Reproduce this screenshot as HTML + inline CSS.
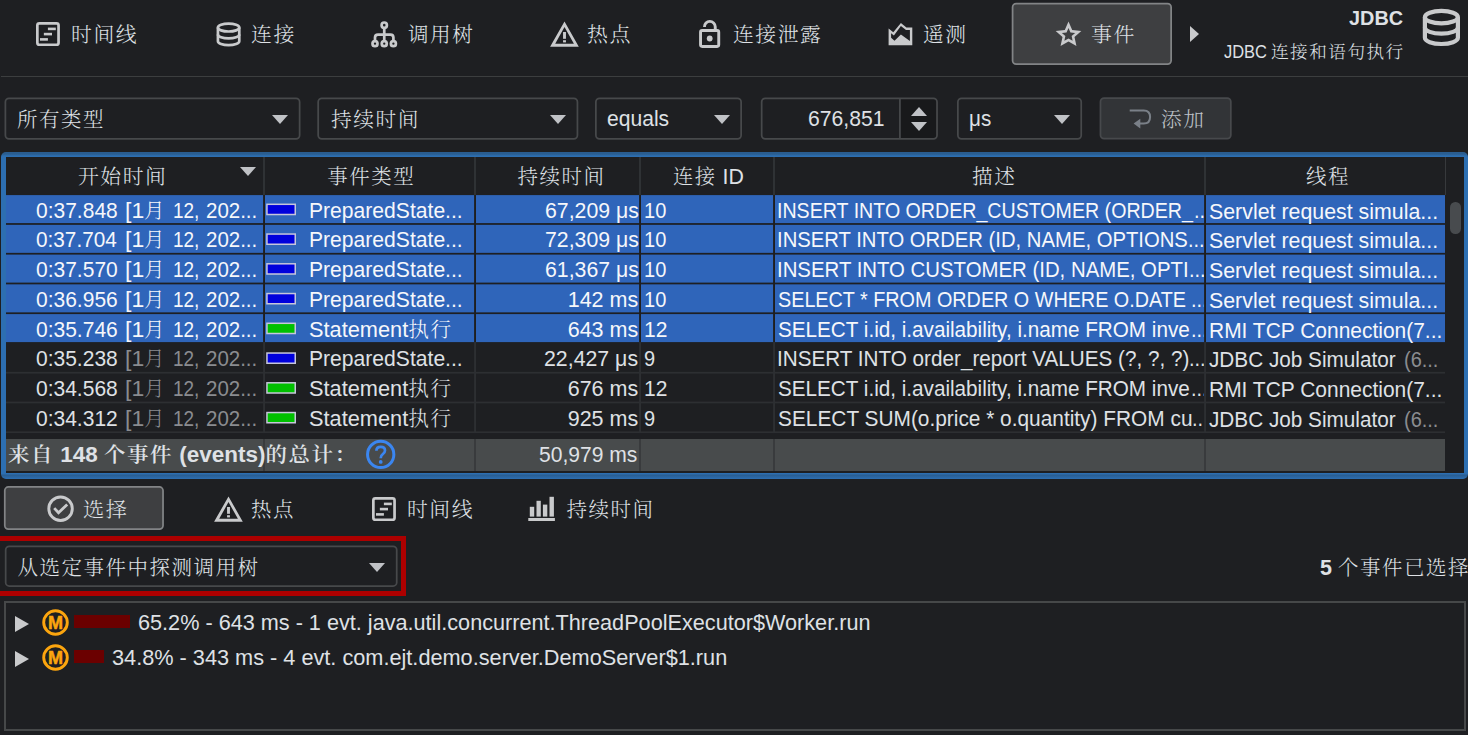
<!DOCTYPE html>
<html lang="zh-CN">
<head>
<meta charset="utf-8">
<title>JDBC 事件</title>
<style>
html,body{margin:0;padding:0;}
body{width:1468px;height:735px;background:#1e1f22;color:#dfe1e5;overflow:hidden;position:relative;
  font-family:"Liberation Sans","Noto Serif CJK SC",sans-serif;font-size:21.5px;}
.abs{position:absolute;}
.t{position:absolute;white-space:nowrap;line-height:30px;height:30px;transform-origin:0 0;}
.c{font-size:20.5px;letter-spacing:1.5px;font-weight:300;}
.tc{position:absolute;white-space:nowrap;line-height:30px;height:30px;font-size:20.5px;letter-spacing:1.5px;transform-origin:0 0;font-weight:300;}
svg{position:absolute;overflow:visible;}
.arrow{position:absolute;width:0;height:0;border-left:8px solid transparent;border-right:8px solid transparent;border-top:9.2px solid #c0c2c6;}
.row{position:absolute;left:6px;width:1439px;}
.vl{position:absolute;width:2px;}
.clip{position:absolute;overflow:hidden;}
</style>
</head>
<body>

<svg style="left:0;top:0" width="1468" height="735" viewBox="0 0 1468 735"><rect x="1012.58" y="3.58" width="158.55" height="60.65" rx="3.62" fill="#3e3f41" stroke="#828486" stroke-width="1.75"/><rect x="5.38" y="98.28" width="294.25" height="40.65" rx="3.62" fill="none" stroke="#47494b" stroke-width="1.75"/><rect x="318.18" y="98.28" width="259.25" height="40.65" rx="3.62" fill="none" stroke="#47494b" stroke-width="1.75"/><rect x="595.88" y="98.28" width="145.25" height="40.65" rx="3.62" fill="none" stroke="#47494b" stroke-width="1.75"/><path d="M900.8 98.3H933.4Q937 98.3 937 101.9V135.3Q937 138.9 933.4 138.9H900.8Z" fill="#18191b"/><path d="M899.9 98V139" stroke="#47494b" stroke-width="1.75"/><rect x="761.67" y="98.28" width="175.35" height="40.65" rx="3.62" fill="none" stroke="#47494b" stroke-width="1.75"/><rect x="957.88" y="98.28" width="123.35" height="40.65" rx="3.62" fill="none" stroke="#47494b" stroke-width="1.75"/><rect x="1100.47" y="98.17" width="130.35" height="40.45" rx="3.62" fill="#323437" stroke="#47494c" stroke-width="1.75"/><rect x="4.78" y="486.98" width="158.25" height="42.25" rx="3.62" fill="#3e3f41" stroke="#828486" stroke-width="1.75"/><rect x="5.67" y="546.27" width="391.05" height="39.75" rx="3.62" fill="none" stroke="#47494b" stroke-width="1.75"/></svg>
<!-- ===== top toolbar ===== -->
<div class="tc" style="left:71.0px;top:20px;transform:scaleX(1.0175);">时间线</div>
<div class="tc" style="left:251.0px;top:20px;transform:scaleX(1.0195);">连接</div>
<div class="tc" style="left:408.2px;top:20px;transform:scaleX(1.0047);">调用树</div>
<div class="tc" style="left:587.0px;top:20px;transform:scaleX(1.0244);">热点</div>
<div class="tc" style="left:733.2px;top:20px;transform:scaleX(1.0165);">连接泄露</div>
<div class="tc" style="left:922.6px;top:20px;transform:scaleX(1.0122);">遥测</div>
<div class="tc" style="left:1091.0px;top:20px;transform:scaleX(1.0244);">事件</div>
<div class="t" style="left:1349.2px;top:3px;transform:scaleX(0.9926);font-weight:bold;font-size:20px;">JDBC</div>
<div class="t" style="left:1223.6px;top:36.5px;transform:scaleX(0.9130);font-size:18px;">JDBC</div>
<div class="t" style="left:1271.1px;top:36.5px;transform:scaleX(1.0054);font-size:17.5px;letter-spacing:1.5px;font-weight:300;">连接和语句执行</div>
<svg style="left:36.2px;top:22.4px" width="24" height="24" viewBox="0 0 24 24" fill="#c9cacc"><rect x="1.35" y="1.35" width="21.2" height="21.4" rx="2" fill="none" stroke="#c9cacc" stroke-width="2.7"/><rect x="11.9" y="5.6" width="7.9" height="2.6"/><rect x="7.85" y="10.8" width="8.15" height="2.6"/><rect x="4" y="16.1" width="7.9" height="2.6"/></svg>
<svg style="left:0;top:0" width="1468" height="80" viewBox="0 0 1468 80" fill="none" stroke="#c9cacc" stroke-width="2.7"><ellipse cx="228.6" cy="27.6" rx="10.67" ry="3.9"/><path d="M217.93 27.6V41.2A10.67 3.9 0 0 0 239.26999999999998 41.2V27.6"/><path d="M217.93 34.4A10.67 3.9 0 0 0 239.26999999999998 34.4"/></svg>
<svg style="left:0;top:0" width="1468" height="80" viewBox="0 0 1468 80" fill="none" stroke="#c9cacc" stroke-width="2.7"><circle cx="384.25" cy="25.15" r="2.65"/><circle cx="375" cy="43.65" r="2.5"/><circle cx="384.25" cy="43.65" r="2.5"/><circle cx="393.4" cy="43.65" r="2.5"/><path d="M384.25 27.8V41.1M375 41.1V37.6Q375 34.6 378 34.6H390.4Q393.4 34.6 393.4 37.6V41.1"/></svg>
<svg style="left:550px;top:21px" width="29" height="27" viewBox="0 0 29 27" fill="#c9cacc"><path fill-rule="evenodd" d="M14.5 0.6L28.8 25.65H0.1ZM14.5 6.1L23.9 22.8H5.2Z"/><rect x="13.05" y="11" width="2.9" height="6.8"/><rect x="13.05" y="19.2" width="2.9" height="2.2"/></svg>
<svg style="left:0;top:0" width="1468" height="80" viewBox="0 0 1468 80" fill="none" stroke="#c9cacc" stroke-width="2.9"><rect x="700.55" y="30.55" width="18.2" height="15.9" rx="1.6"/><path d="M704.45 26.9A5.4 5.4 0 0 1 715.25 26.75V30"/><circle cx="709.7" cy="38.5" r="2.9" fill="#c9cacc" stroke="none"/></svg>
<svg style="left:0;top:0" width="1468" height="80" viewBox="0 0 1468 80"><path fill="#c9cacc" fill-rule="evenodd" d="M888.6 28.4L893.3 32.2L900.9 22.9L906.4 27.6H912.3V45.2H888.6ZM891.1 33.3L893.9 35.5L900.9 25.9L906 30H909.9V40.9L900.9 34.5L894.5 40.7L891.1 37.8Z"/></svg>
<svg style="left:0;top:0" width="1468" height="80" viewBox="0 0 1468 80" fill="#c9cacc"><path fill-rule="evenodd" d="M1068.50 21.60L1072.20 30.00L1081.34 30.93L1074.49 37.05L1076.44 46.02L1068.50 41.40L1060.56 46.02L1062.51 37.05L1055.66 30.93L1064.80 30.00ZM1068.50 28.10L1070.44 32.43L1075.16 32.94L1071.64 36.12L1072.61 40.76L1068.50 38.40L1064.39 40.76L1065.36 36.12L1061.84 32.94L1066.56 32.43Z"/></svg>
<div class="abs" style="left:1190px;top:26px;width:0;height:0;border-top:8.5px solid transparent;border-bottom:8.5px solid transparent;border-left:9px solid #c9cacc;"></div>
<svg style="left:0;top:0" width="1468" height="80" viewBox="0 0 1468 80" fill="none" stroke="#c9cacc" stroke-width="4.2"><ellipse cx="1441.4" cy="17.15" rx="16.5" ry="6.25"/><path d="M1424.9 17.15V37.75A16.5 6.25 0 0 0 1457.9 37.75V17.15"/><path d="M1424.9 27.45A16.5 6.25 0 0 0 1457.9 27.45"/></svg>
<div class="abs" style="left:1px;top:76px;width:1467px;height:1px;background:#3c3e3f;"></div>
<!-- ===== filter row ===== -->
<div class="arrow" style="left:272.2px;top:114.7px;"></div>
<div class="tc" style="left:17.0px;top:104.5px;">所有类型</div>
<div class="arrow" style="left:550.0px;top:114.7px;"></div>
<div class="tc" style="left:331.0px;top:104.5px;transform:scaleX(1.0118);">持续时间</div>
<div class="arrow" style="left:713.7px;top:114.7px;"></div>
<div class="t" style="left:607.2px;top:103.5px;transform:scaleX(0.9806);">equals</div>
<div class="abs" style="left:911px;top:106.6px;width:0;height:0;border-left:8px solid transparent;border-right:8px solid transparent;border-bottom:9.2px solid #c0c2c6;"></div>
<div class="arrow" style="left:911px;top:121.8px;"></div>
<div class="t" style="left:807.7px;top:103.5px;transform:scaleX(0.9842);">676,851</div>
<div class="arrow" style="left:1053.8px;top:114.7px;"></div>
<div class="t" style="left:968.8px;top:103.5px;transform:scaleX(0.9591);">μs</div>
<svg style="left:1128px;top:107px" width="26" height="24" viewBox="0 0 26 24" fill="none" stroke="#7a8088" stroke-width="2"><path d="M1.7 3.4H15.8Q22.1 3.4 22.1 10Q22.1 16.6 15.8 16.6H11"/><path d="M5.6 16.6L12.3 11.7V21.5Z" fill="#7a8088" stroke="none"/></svg>
<div class="tc" style="left:1161.4px;top:104.5px;transform:scaleX(1.0098);color:#bcc0c6;">添加</div>
<!-- ===== table ===== -->
<div class="abs" style="left:1px;top:152px;width:1467px;height:327px;box-sizing:border-box;border-radius:5px;background:linear-gradient(#2a5d90 0,#2a5d90 2px,#2d6fb2 4px,#2d6fb2 322px,#2a5d90 323px,#2b66a2 325px,#2d6fb2 327px);"></div>
<div class="abs" style="left:6px;top:157px;width:1458px;height:316px;background:#1e1f22;"></div>
<svg style="left:0;top:0" width="1468" height="735" viewBox="0 0 1468 735"><rect x="6" y="195.1" width="1439" height="28" fill="#2f65ba"/><rect x="266.95" y="204.30" width="28.3" height="10.2" fill="#0000dc" stroke="#c6c6da" stroke-width="1.5"/><rect x="6" y="224.85" width="1439" height="28" fill="#2f65ba"/><rect x="266.95" y="234.05" width="28.3" height="10.2" fill="#0000dc" stroke="#c6c6da" stroke-width="1.5"/><rect x="6" y="254.6" width="1439" height="28" fill="#2f65ba"/><rect x="266.95" y="263.80" width="28.3" height="10.2" fill="#0000dc" stroke="#c6c6da" stroke-width="1.5"/><rect x="6" y="284.35" width="1439" height="28" fill="#2f65ba"/><rect x="266.95" y="293.55" width="28.3" height="10.2" fill="#0000dc" stroke="#c6c6da" stroke-width="1.5"/><rect x="6" y="314.1" width="1439" height="28" fill="#2f65ba"/><rect x="266.95" y="323.30" width="28.3" height="10.2" fill="#00c000" stroke="#c6c6da" stroke-width="1.5"/><rect x="6" y="371.85" width="1439" height="1.75" fill="#2d2f32"/><rect x="266.95" y="353.05" width="28.3" height="10.2" fill="#0000dc" stroke="#c6c6da" stroke-width="1.5"/><rect x="6" y="401.6" width="1439" height="1.75" fill="#2d2f32"/><rect x="266.95" y="382.80" width="28.3" height="10.2" fill="#00c000" stroke="#c6c6da" stroke-width="1.5"/><rect x="6" y="431.35" width="1439" height="1.75" fill="#2d2f32"/><rect x="266.95" y="412.55" width="28.3" height="10.2" fill="#00c000" stroke="#c6c6da" stroke-width="1.5"/><rect x="263.1" y="195" width="1.9" height="147.1" fill="#1f1e1e"/><rect x="263.1" y="342.1" width="1.9" height="91" fill="#2d2f32"/><rect x="474.1" y="195" width="1.9" height="147.1" fill="#1f1e1e"/><rect x="474.1" y="342.1" width="1.9" height="91" fill="#2d2f32"/><rect x="639.1" y="195" width="1.9" height="147.1" fill="#1f1e1e"/><rect x="639.1" y="342.1" width="1.9" height="91" fill="#2d2f32"/><rect x="773.1" y="195" width="1.9" height="147.1" fill="#1f1e1e"/><rect x="773.1" y="342.1" width="1.9" height="91" fill="#2d2f32"/><rect x="1204.1" y="195" width="1.9" height="147.1" fill="#1f1e1e"/><rect x="1204.1" y="342.1" width="1.9" height="91" fill="#2d2f32"/></svg>
<div class="tc" style="left:78.0px;top:162px;transform:scaleX(1.0167);">开始时间</div>
<div class="tc" style="left:327.3px;top:162px;">事件类型</div>
<div class="tc" style="left:517.5px;top:162px;">持续时间</div>
<div class="t" style="left:672.8px;top:161.5px;transform:scaleX(0.9900);"><span class="c">连接</span> ID</div>
<div class="tc" style="left:971.7px;top:162px;transform:scaleX(1.0098);">描述</div>
<div class="tc" style="left:1306.0px;top:162px;">线程</div>
<div class="arrow" style="left:240px;top:167px;"></div>
<div class="vl" style="left:263px;top:157px;height:38px;width:2px;background:#2f3235;"></div>
<div class="vl" style="left:474px;top:157px;height:38px;width:2px;background:#2f3235;"></div>
<div class="vl" style="left:639px;top:157px;height:38px;width:2px;background:#2f3235;"></div>
<div class="vl" style="left:773px;top:157px;height:38px;width:2px;background:#2f3235;"></div>
<div class="vl" style="left:1204px;top:157px;height:38px;width:2px;background:#2f3235;"></div>
<div class="vl" style="left:1445px;top:157px;height:38px;width:1px;background:#37393c;"></div>
<div class="t" style="left:36.0px;top:195.5px;transform:scaleX(0.9768);color:#f6f7fa;">0:37.848</div>
<div class="t" style="left:124.8px;top:195.5px;transform:scaleX(1.0687);color:#f6f7fa;">[1</div>
<div class="tc" style="left:144.2px;top:195.5px;transform:scaleX(1.0063);color:#f6f7fa;">月</div>
<div class="t" style="left:173.2px;top:195.5px;transform:scaleX(0.8821);color:#f6f7fa;">12,</div>
<div class="t" style="left:206.3px;top:195.5px;transform:scaleX(0.9529);color:#f6f7fa;">202...</div>
<div class="t" style="left:309.0px;top:195.5px;transform:scaleX(0.9818);color:#f6f7fa;">PreparedState...</div>
<div class="t" style="left:544.6px;top:195.5px;transform:scaleX(0.9892);color:#f6f7fa;">67,209 μs</div>
<div class="t" style="left:643.9px;top:195.5px;transform:scaleX(0.9304);color:#f6f7fa;">10</div>
<div class="clip" style="left:776px;top:195.5px;width:428px;height:30px;">
<div class="t" style="left:1.4px;top:0px;transform:scaleX(0.9121);color:#f6f7fa;">INSERT INTO ORDER_CUSTOMER (ORDER_</div>
<div class="t" style="left:418.4px;top:0px;transform:scaleX(0.9286);color:#f6f7fa;">...</div>
</div>
<div class="t" style="left:1208.8px;top:196.5px;transform:scaleX(0.9934);color:#f6f7fa;">Servlet request simula...</div>
<div class="t" style="left:36.0px;top:225.25px;transform:scaleX(0.9651);color:#f6f7fa;">0:37.704</div>
<div class="t" style="left:124.8px;top:225.25px;transform:scaleX(1.0687);color:#f6f7fa;">[1</div>
<div class="tc" style="left:144.2px;top:225.25px;transform:scaleX(1.0063);color:#f6f7fa;">月</div>
<div class="t" style="left:173.2px;top:225.25px;transform:scaleX(0.8821);color:#f6f7fa;">12,</div>
<div class="t" style="left:206.3px;top:225.25px;transform:scaleX(0.9529);color:#f6f7fa;">202...</div>
<div class="t" style="left:309.0px;top:225.25px;transform:scaleX(0.9818);color:#f6f7fa;">PreparedState...</div>
<div class="t" style="left:544.6px;top:225.25px;transform:scaleX(0.9892);color:#f6f7fa;">72,309 μs</div>
<div class="t" style="left:643.9px;top:225.25px;transform:scaleX(0.9304);color:#f6f7fa;">10</div>
<div class="clip" style="left:776px;top:225.25px;width:428px;height:30px;">
<div class="t" style="left:1.3px;top:0px;transform:scaleX(0.9422);color:#f6f7fa;">INSERT INTO ORDER (ID, NAME, OPTIONS</div>
<div class="t" style="left:412.3px;top:0px;transform:scaleX(0.9286);color:#f6f7fa;">...</div>
</div>
<div class="t" style="left:1208.8px;top:226.25px;transform:scaleX(0.9934);color:#f6f7fa;">Servlet request simula...</div>
<div class="t" style="left:36.0px;top:255.0px;transform:scaleX(0.9768);color:#f6f7fa;">0:37.570</div>
<div class="t" style="left:124.8px;top:255.0px;transform:scaleX(1.0687);color:#f6f7fa;">[1</div>
<div class="tc" style="left:144.2px;top:255.0px;transform:scaleX(1.0063);color:#f6f7fa;">月</div>
<div class="t" style="left:173.2px;top:255.0px;transform:scaleX(0.8821);color:#f6f7fa;">12,</div>
<div class="t" style="left:206.3px;top:255.0px;transform:scaleX(0.9529);color:#f6f7fa;">202...</div>
<div class="t" style="left:309.0px;top:255.0px;transform:scaleX(0.9818);color:#f6f7fa;">PreparedState...</div>
<div class="t" style="left:544.6px;top:255.0px;transform:scaleX(0.9892);color:#f6f7fa;">61,367 μs</div>
<div class="t" style="left:643.9px;top:255.0px;transform:scaleX(0.9304);color:#f6f7fa;">10</div>
<div class="clip" style="left:776px;top:255.0px;width:428px;height:30px;">
<div class="t" style="left:1.3px;top:0px;transform:scaleX(0.9476);color:#f6f7fa;">INSERT INTO CUSTOMER (ID, NAME, OPTI</div>
<div class="t" style="left:412.7px;top:0px;transform:scaleX(0.9286);color:#f6f7fa;">...</div>
</div>
<div class="t" style="left:1208.8px;top:256.0px;transform:scaleX(0.9934);color:#f6f7fa;">Servlet request simula...</div>
<div class="t" style="left:36.0px;top:284.75px;transform:scaleX(0.9768);color:#f6f7fa;">0:36.956</div>
<div class="t" style="left:124.8px;top:284.75px;transform:scaleX(1.0687);color:#f6f7fa;">[1</div>
<div class="tc" style="left:144.2px;top:284.75px;transform:scaleX(1.0063);color:#f6f7fa;">月</div>
<div class="t" style="left:173.2px;top:284.75px;transform:scaleX(0.8821);color:#f6f7fa;">12,</div>
<div class="t" style="left:206.3px;top:284.75px;transform:scaleX(0.9529);color:#f6f7fa;">202...</div>
<div class="t" style="left:309.0px;top:284.75px;transform:scaleX(0.9818);color:#f6f7fa;">PreparedState...</div>
<div class="t" style="left:567.7px;top:284.75px;color:#f6f7fa;">142 ms</div>
<div class="t" style="left:643.9px;top:284.75px;transform:scaleX(0.9304);color:#f6f7fa;">10</div>
<div class="clip" style="left:776px;top:284.75px;width:428px;height:30px;">
<div class="t" style="left:2.3px;top:0px;transform:scaleX(0.9197);color:#f6f7fa;">SELECT * FROM ORDER O WHERE O.DATE</div>
<div class="t" style="left:415.1px;top:0px;transform:scaleX(0.9286);color:#f6f7fa;">...</div>
</div>
<div class="t" style="left:1208.8px;top:285.75px;transform:scaleX(0.9934);color:#f6f7fa;">Servlet request simula...</div>
<div class="t" style="left:36.0px;top:314.5px;transform:scaleX(0.9768);color:#f6f7fa;">0:35.746</div>
<div class="t" style="left:124.8px;top:314.5px;transform:scaleX(1.0687);color:#f6f7fa;">[1</div>
<div class="tc" style="left:144.2px;top:314.5px;transform:scaleX(1.0063);color:#f6f7fa;">月</div>
<div class="t" style="left:173.2px;top:314.5px;transform:scaleX(0.8821);color:#f6f7fa;">12,</div>
<div class="t" style="left:206.3px;top:314.5px;transform:scaleX(0.9529);color:#f6f7fa;">202...</div>
<div class="t" style="left:309.0px;top:314.5px;transform:scaleX(1.0122);color:#f6f7fa;">Statement<span class="c">执行</span></div>
<div class="t" style="left:567.7px;top:314.5px;color:#f6f7fa;">643 ms</div>
<div class="t" style="left:643.8px;top:314.5px;transform:scaleX(0.9773);color:#f6f7fa;">12</div>
<div class="clip" style="left:776px;top:314.5px;width:428px;height:30px;">
<div class="t" style="left:2.2px;top:0px;transform:scaleX(0.9616);color:#f6f7fa;">SELECT i.id, i.availability, i.name FROM inve</div>
<div class="t" style="left:414.6px;top:0px;transform:scaleX(0.9286);color:#f6f7fa;">...</div>
</div>
<div class="t" style="left:1209.2px;top:315.5px;transform:scaleX(0.9747);color:#f6f7fa;">RMI TCP Connection(7...</div>
<div class="t" style="left:36.0px;top:344.25px;transform:scaleX(0.9768);">0:35.238</div>
<div class="t" style="left:124.8px;top:344.25px;transform:scaleX(1.0687);color:#8a8c90;">[1</div>
<div class="tc" style="left:144.2px;top:344.25px;transform:scaleX(1.0063);color:#8a8c90;">月</div>
<div class="t" style="left:173.2px;top:344.25px;transform:scaleX(0.8821);color:#8a8c90;">12,</div>
<div class="t" style="left:206.3px;top:344.25px;transform:scaleX(0.9529);color:#8a8c90;">202...</div>
<div class="t" style="left:309.0px;top:344.25px;transform:scaleX(0.9818);">PreparedState...</div>
<div class="t" style="left:544.4px;top:344.25px;transform:scaleX(0.9914);">22,427 μs</div>
<div class="t" style="left:643.9px;top:344.25px;transform:scaleX(0.9300);">9</div>
<div class="clip" style="left:776px;top:344.25px;width:428px;height:30px;">
<div class="t" style="left:1.3px;top:0px;transform:scaleX(0.9620);">INSERT INTO order_report VALUES (?, ?, ?)</div>
<div class="t" style="left:412.7px;top:0px;transform:scaleX(0.9286);">...</div>
</div>
<div class="t" style="left:1209.2px;top:345.25px;transform:scaleX(0.9644);">JDBC Job Simulator</div>
<div class="t" style="left:1403.8px;top:345.25px;transform:scaleX(0.9294);color:#8a8c90;">(6...</div>
<div class="t" style="left:36.0px;top:374.0px;transform:scaleX(0.9768);">0:34.568</div>
<div class="t" style="left:124.8px;top:374.0px;transform:scaleX(1.0687);color:#8a8c90;">[1</div>
<div class="tc" style="left:144.2px;top:374.0px;transform:scaleX(1.0063);color:#8a8c90;">月</div>
<div class="t" style="left:173.2px;top:374.0px;transform:scaleX(0.8821);color:#8a8c90;">12,</div>
<div class="t" style="left:206.3px;top:374.0px;transform:scaleX(0.9529);color:#8a8c90;">202...</div>
<div class="t" style="left:309.0px;top:374.0px;transform:scaleX(1.0122);">Statement<span class="c">执行</span></div>
<div class="t" style="left:567.7px;top:374.0px;">676 ms</div>
<div class="t" style="left:643.8px;top:374.0px;transform:scaleX(0.9773);">12</div>
<div class="clip" style="left:776px;top:374.0px;width:428px;height:30px;">
<div class="t" style="left:2.2px;top:0px;transform:scaleX(0.9616);">SELECT i.id, i.availability, i.name FROM inve</div>
<div class="t" style="left:414.6px;top:0px;transform:scaleX(0.9286);">...</div>
</div>
<div class="t" style="left:1209.2px;top:375.0px;transform:scaleX(0.9747);">RMI TCP Connection(7...</div>
<div class="t" style="left:36.0px;top:403.75px;transform:scaleX(0.9768);">0:34.312</div>
<div class="t" style="left:124.8px;top:403.75px;transform:scaleX(1.0687);color:#8a8c90;">[1</div>
<div class="tc" style="left:144.2px;top:403.75px;transform:scaleX(1.0063);color:#8a8c90;">月</div>
<div class="t" style="left:173.2px;top:403.75px;transform:scaleX(0.8821);color:#8a8c90;">12,</div>
<div class="t" style="left:206.3px;top:403.75px;transform:scaleX(0.9529);color:#8a8c90;">202...</div>
<div class="t" style="left:309.0px;top:403.75px;transform:scaleX(1.0122);">Statement<span class="c">执行</span></div>
<div class="t" style="left:567.7px;top:403.75px;">925 ms</div>
<div class="t" style="left:643.9px;top:403.75px;transform:scaleX(0.9300);">9</div>
<div class="clip" style="left:776px;top:403.75px;width:428px;height:30px;">
<div class="t" style="left:2.2px;top:0px;transform:scaleX(0.9699);">SELECT SUM(o.price * o.quantity) FROM cu</div>
<div class="t" style="left:416.3px;top:0px;transform:scaleX(0.9286);">...</div>
</div>
<div class="t" style="left:1209.2px;top:404.75px;transform:scaleX(0.9644);">JDBC Job Simulator</div>
<div class="t" style="left:1403.8px;top:404.75px;transform:scaleX(0.9294);color:#8a8c90;">(6...</div>

<div class="row" style="top:439px;height:32px;background:#484b4c;"></div>
<div class="vl" style="left:263px;top:439px;height:32px;background:#393b3d;"></div>
<div class="vl" style="left:474px;top:439px;height:32px;background:#393b3d;"></div>
<div class="vl" style="left:639px;top:439px;height:32px;background:#393b3d;"></div>
<div class="vl" style="left:773px;top:439px;height:32px;background:#393b3d;"></div>
<div class="vl" style="left:1204px;top:439px;height:32px;background:#393b3d;"></div>
<div class="t" style="left:8.0px;top:440px;transform:scaleX(1.0453);font-weight:bold;"><span class="c" style="font-weight:600">来自</span> 148 <span class="c" style="font-weight:600">个事件</span> (events)<span class="c" style="font-weight:600">的总计：</span></div>
<svg style="left:0;top:0" width="1468" height="735" viewBox="0 0 1468 735" fill="none" stroke="#3b86f0" stroke-width="3"><circle cx="380.7" cy="454.4" r="13.15"/><path d="M376.4 450.8Q376.4 446.9 380.7 446.9Q385 446.9 385 450.6Q385 452.8 382.8 454.2Q380.7 455.6 380.7 458.2" stroke-width="2.7"/><circle cx="380.7" cy="461.9" r="1.9" fill="#3b86f0" stroke="none"/></svg>
<div class="t" style="left:538.5px;top:440px;transform:scaleX(0.9798);">50,979 ms</div>
<div class="abs" style="left:1450px;top:202px;width:10.5px;height:32px;border-radius:5.25px;background:#484b4e;"></div>
<!-- ===== bottom tabs ===== -->
<svg style="left:0;top:0" width="1468" height="735" viewBox="0 0 1468 735" fill="none" stroke="#c9cacc" stroke-width="2.9"><circle cx="60.55" cy="508.7" r="11.75"/><path d="M54.2 508.1L58.5 512.7L67.2 504.5" stroke-width="2.8"/></svg>
<div class="tc" style="left:82.9px;top:494.5px;transform:scaleX(1.0366);">选择</div>
<svg style="left:214px;top:495.5px" width="29" height="27" viewBox="0 0 29 27" fill="#c9cacc"><path fill-rule="evenodd" d="M14.5 0.6L28.8 25.65H0.1ZM14.5 6.1L23.9 22.8H5.2Z"/><rect x="13.05" y="11" width="2.9" height="6.8"/><rect x="13.05" y="19.2" width="2.9" height="2.2"/></svg>
<div class="tc" style="left:251.4px;top:494.5px;transform:scaleX(0.9951);">热点</div>
<svg style="left:372.2px;top:496.7px" width="24" height="24" viewBox="0 0 24 24" fill="#c9cacc"><rect x="1.35" y="1.35" width="21.2" height="21.4" rx="2" fill="none" stroke="#c9cacc" stroke-width="2.7"/><rect x="11.9" y="5.6" width="7.9" height="2.6"/><rect x="7.85" y="10.8" width="8.15" height="2.6"/><rect x="4" y="16.1" width="7.9" height="2.6"/></svg>
<div class="tc" style="left:407.2px;top:494.5px;transform:scaleX(1.0159);">时间线</div>
<svg style="left:528px;top:496px" width="27" height="26" viewBox="0 0 27 26" fill="#c9cacc"><rect x="1.8" y="10.8" width="4.4" height="9.8"/><rect x="8.5" y="4.8" width="4.3" height="15.8"/><rect x="14.9" y="8.6" width="4.4" height="12"/><rect x="21.5" y="0.8" width="4.4" height="19.8"/><rect x="0.3" y="22" width="26.6" height="3"/></svg>
<div class="tc" style="left:566.5px;top:494.5px;">持续时间</div>
<div class="abs" style="left:-5px;top:536px;width:411px;height:60px;box-sizing:border-box;border:5px solid #ad0000;"></div>
<div class="arrow" style="left:369.3px;top:562.7px;"></div>
<div class="tc" style="left:17.5px;top:552.5px;">从选定事件中探测调用树</div>
<div class="t" style="left:1320.0px;top:552.5px;"><b>5</b> <span class="c">个事件已选择</span></div>
<div class="abs" style="left:4px;top:601px;width:1462px;height:130px;box-sizing:border-box;border:2px solid #464849;"></div>
<div class="abs" style="left:14.8px;top:615.6px;width:0;height:0;border-top:8px solid transparent;border-bottom:8px solid transparent;border-left:14.4px solid #c9cacc;"></div>
<svg style="left:41.75px;top:608.9000000000001px" width="27" height="27" viewBox="0 0 27 27"><circle cx="13.5" cy="13.5" r="11.8" fill="none" stroke="#fca50e" stroke-width="2.9"/><text x="13.5" y="20.1" text-anchor="middle" font-family="Liberation Sans, sans-serif" font-weight="bold" font-size="18" fill="#fca50e" stroke="#fca50e" stroke-width="0.5">M</text></svg>
<div class="abs" style="left:74px;top:615.0px;width:56px;height:13px;background:#6b0000;"></div>
<div class="t" style="left:137.9px;top:607.7px;transform:scaleX(1.0070);">65.2% - 643 ms - 1 evt. java.util.concurrent.ThreadPoolExecutor$Worker.run</div>
<div class="abs" style="left:14.8px;top:650.6px;width:0;height:0;border-top:8px solid transparent;border-bottom:8px solid transparent;border-left:14.4px solid #c9cacc;"></div>
<svg style="left:41.75px;top:643.9000000000001px" width="27" height="27" viewBox="0 0 27 27"><circle cx="13.5" cy="13.5" r="11.8" fill="none" stroke="#fca50e" stroke-width="2.9"/><text x="13.5" y="20.1" text-anchor="middle" font-family="Liberation Sans, sans-serif" font-weight="bold" font-size="18" fill="#fca50e" stroke="#fca50e" stroke-width="0.5">M</text></svg>
<div class="abs" style="left:74px;top:650.0px;width:30.2px;height:13px;background:#6b0000;"></div>
<div class="t" style="left:112.2px;top:642.7px;transform:scaleX(1.0095);">34.8% - 343 ms - 4 evt. com.ejt.demo.server.DemoServer$1.run</div>
</body>
</html>
